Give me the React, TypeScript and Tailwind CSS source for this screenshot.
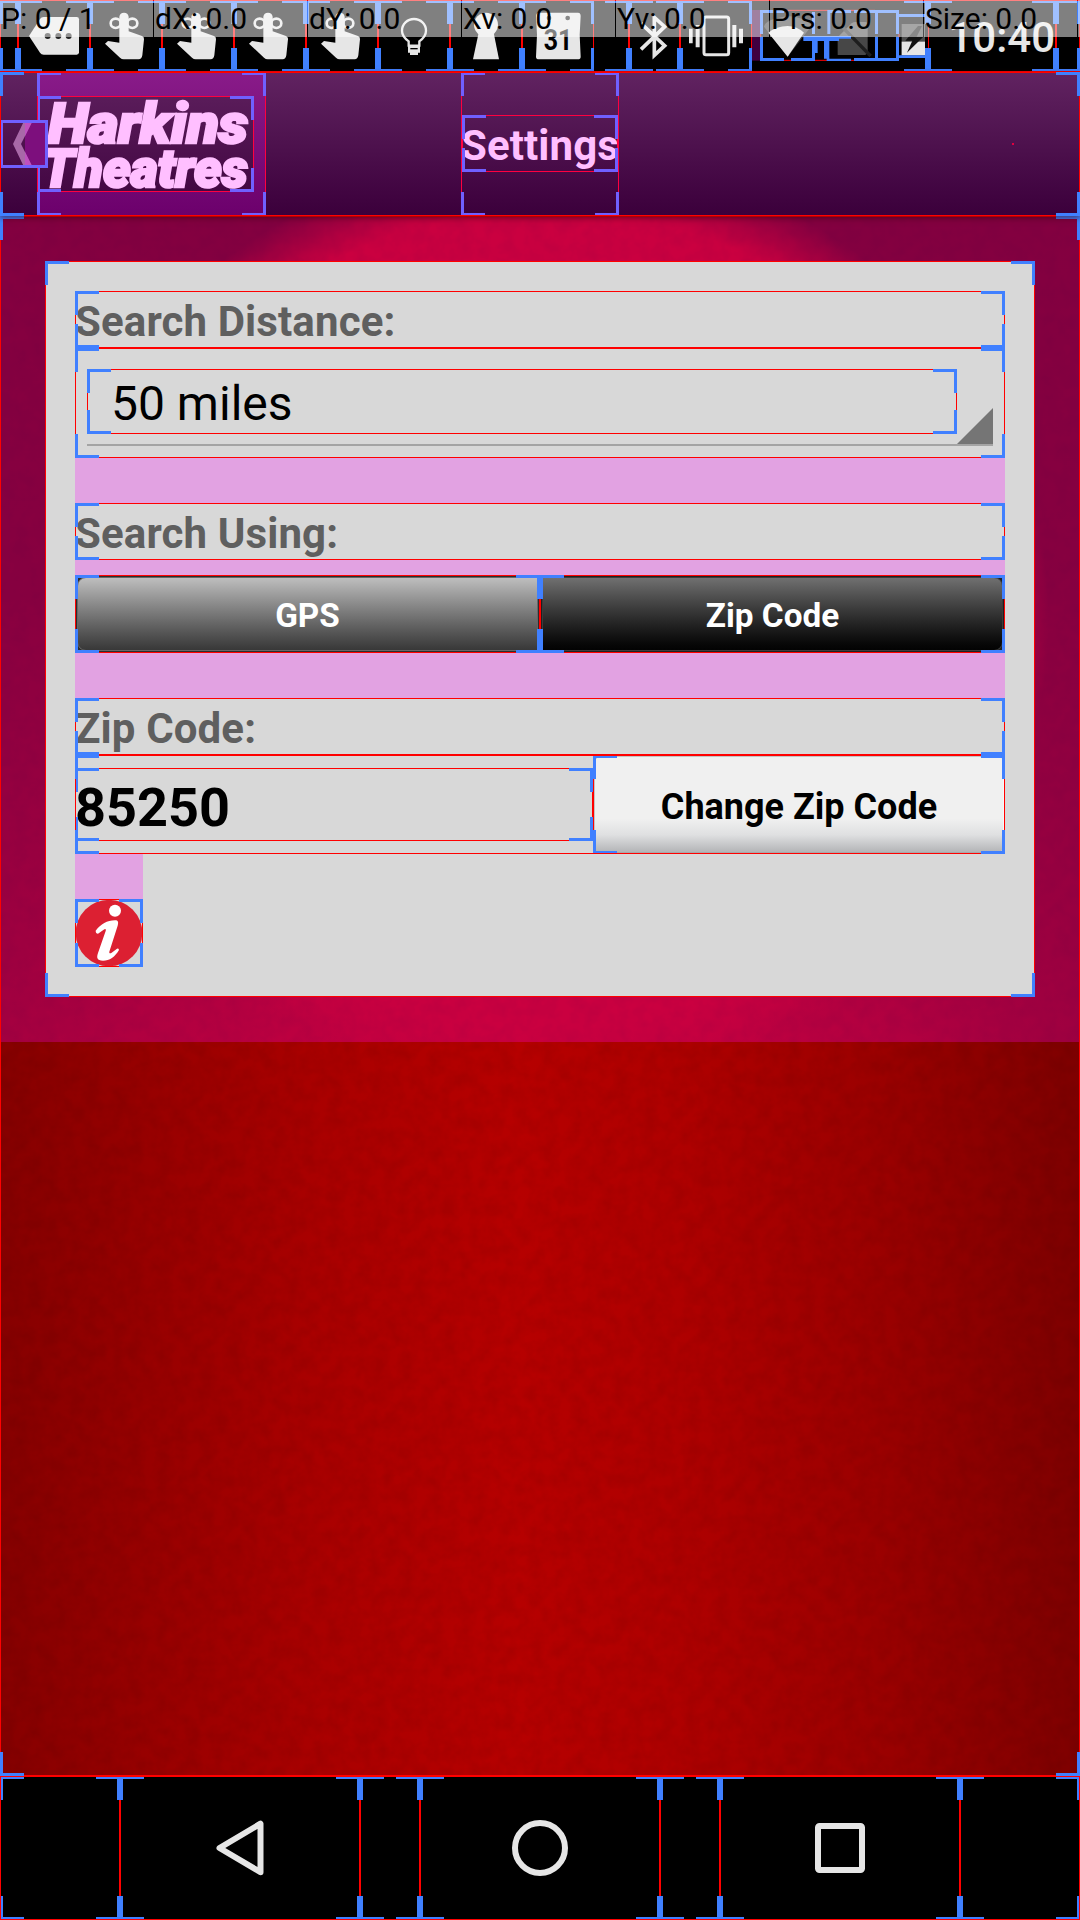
import React from "react";

type Tone = "plain" | "tinted";

/* Layout-bounds outline: a hairline frame with heavy corner marks. */
function Bounds({ tone = "plain" }: { tone?: Tone }) {
  const line = tone === "plain" ? "border-[#ff0000]" : "border-[#ff0040]";
  const mark = tone === "plain" ? "border-[#4080ff]" : "border-[#7060ff]";
  return (
    <span className={`pointer-events-none absolute inset-0 border ${line}`}>
      <span className={`absolute -top-px -left-px h-6 w-6 border-t-3 border-l-3 ${mark}`} />
      <span className={`absolute -top-px -right-px h-6 w-6 border-t-3 border-r-3 ${mark}`} />
      <span className={`absolute -bottom-px -left-px h-6 w-6 border-b-3 border-l-3 ${mark}`} />
      <span className={`absolute -right-px -bottom-px h-6 w-6 border-r-3 border-b-3 ${mark}`} />
    </span>
  );
}

function StatusCell({ width, children }: { width: string; children?: React.ReactNode }) {
  return (
    <div className={`relative h-full shrink-0 ${width}`}>
      {children}
      <Bounds />
    </div>
  );
}

const iconClass = "block h-[72px] w-[72px]";

function TagIcon() {
  return (
    <svg viewBox="0 0 216 216" className={iconClass}>
      <path d="M33 108 66 57Q70 51 77 51H176Q183 51 183 58V157Q183 164 176 164H77Q70 164 66 158Z" fill="#e6e6e6" />
      <g fill="#222"><circle cx="89" cy="108" r="9" /><circle cx="121" cy="108" r="9" /><circle cx="152" cy="108" r="9" /></g>
    </svg>
  );
}

function FingerIcon() {
  return (
    <svg viewBox="0 0 216 216" className={iconClass}>
      <g fill="none" stroke="#e6e6e6" strokeWidth="8">
        <ellipse cx="77" cy="70" rx="15" ry="14" />
        <ellipse cx="127" cy="70" rx="15" ry="14" />
      </g>
      <path d="M88 88V50Q90 38 102 38Q114 38 116 50V94L156 108Q163 111 162 118L157 166Q155 178 146 178H101Q95 178 90 173L45 131L54 123L88 128Z" fill="#e6e6e6" />
    </svg>
  );
}

function BulbIcon() {
  return (
    <svg viewBox="0 0 216 216" className={iconClass}>
      <path d="M92 137V124C80 115 72 106 72 92A36 35 0 0 1 144 92C144 106 136 115 124 124V137Z" fill="none" stroke="#e6e6e6" strokeWidth="7" />
      <path d="M90 138H126V158H120V165H96V158H90Z" fill="#e6e6e6" />
      <path d="M97 146H119" stroke="#000" strokeWidth="4" />
    </svg>
  );
}

function KeyholeIcon() {
  return (
    <svg viewBox="0 0 216 216" className={iconClass}>
      <circle cx="108" cy="74" r="36" fill="#e6e6e6" />
      <path d="M86 98H131L147 178H69Z" fill="#e6e6e6" />
    </svg>
  );
}

function CalendarIcon() {
  return (
    <svg viewBox="0 0 216 216" className={iconClass}>
      <path d="M52 38H168Q176 38 176 48L173 104L176 170Q176 178 167 178H51Q42 178 42 170L45 104L42 48Q42 38 52 38Z" fill="#e6e6e6" />
      <circle cx="81" cy="54" r="7" fill="#111" />
      <circle cx="137" cy="54" r="7" fill="#111" />
      <text x="108" y="150" textAnchor="middle" fontFamily="Roboto, sans-serif" fontWeight="700" fontSize="86" textLength="86" lengthAdjust="spacingAndGlyphs" fill="#000">31</text>
    </svg>
  );
}

function BluetoothIcon() {
  return (
    <svg viewBox="0 0 153 216" className="block h-[72px] w-[51px]">
      <path d="M36 148 107 80 76 52V166L107 137 36 70" fill="none" stroke="#e6e6e6" strokeWidth="11" />
    </svg>
  );
}

function VibrateIcon() {
  return (
    <svg viewBox="0 0 216 216" className={iconClass}>
      <rect x="72" y="51" width="74" height="113" rx="6" fill="none" stroke="#e6e6e6" strokeWidth="9" />
      <g fill="#e6e6e6">
        <path d="M27 86h11v44h-11zM47 75h12v67h-12zM157 75h12v67h-12zM177 86h12v44h-12z" />
      </g>
    </svg>
  );
}

/* Wi-Fi, missing SIM and charging battery with their nested outlines. */
function SignalCluster() {
  return (
    <svg viewBox="96 0 528 216" className="block h-[72px] w-[176px]">
      <rect x="96" y="30" width="26" height="152" fill="#400040" />
      <path d="M203 170 132 80Q135 58 203 48Q250 50 276 76Z" fill="#3a3a3a" />
      <path d="M203 170 145 98Q170 78 203 78Q230 78 252 98Z" fill="#e6e6e6" />
      <path d="M353 165V112L395 70Q400 66 406 66H436Q443 66 443 73V158L436 165Z" fill="#474747" />
      <path d="M362 76 452 168" stroke="#1e1e1e" strokeWidth="10" />
      <path d="M545 72H615V166H545Z" fill="#4d4d4d" />
      <path d="M545 125H615V166H545Z" fill="#e6e6e6" />
      <path d="M594 78 556 122H577L561 158 610 110H590L606 78Z" fill="#111" />
      <path d="M192 31H465M192 181H465M122 102V112M537 102V112" stroke="#f00" strokeWidth="3" fill="none" />
      <g fill="#4080ff">
        <path d="M120 30h72v9h-63v63h-9zM120 110h9v64h63v9h-72z" />
        <path d="M213 174h63v-63h9v72h-72zM276 36h9v66h-9zM250 108h143v8h-36v7h-107zM285 123h8v36h-8zM312 123h16v53h65v7h-73v-7h-8zM322 30h71v9h-62v63h-9z" />
        <path d="M402 30h135v72h-9v-63h-54v63h-9v-63h-63zM402 174h63v-64h9v64h54v-64h9v73h-135z" />
        <path d="M537 42h78v9h-78zM537 166h78v8h-78z" />
        <path d="M552 3h63v6h-63zM552 207h63v6h-63zM615 3h9v69h-9zM615 144h9v69h-9z" />
      </g>
    </svg>
  );
}

const pointerReadouts = ["P: 0 / 1", "dX: 0.0", "dY: 0.0", "Xv: 0.0", "Yv: 0.0", "Prs: 0.0", "Size: 0.0"];

function StatusBar() {
  return (
    <header className="relative h-[72px] bg-black">
      <div className="flex h-full">
        <StatusCell width="w-[18px]" />
        <StatusCell width="w-[72px]"><TagIcon /></StatusCell>
        <StatusCell width="w-[72px]"><FingerIcon /></StatusCell>
        <StatusCell width="w-[72px]"><FingerIcon /></StatusCell>
        <StatusCell width="w-[72px]"><FingerIcon /></StatusCell>
        <StatusCell width="w-[72px]"><FingerIcon /></StatusCell>
        <StatusCell width="w-[72px]"><BulbIcon /></StatusCell>
        <StatusCell width="w-[72px]"><KeyholeIcon /></StatusCell>
        <StatusCell width="w-[72px]"><CalendarIcon /></StatusCell>
        <div className="relative ml-[11px] h-full w-6">
          <span className="absolute inset-x-0 top-0 h-[3px] bg-[#4080ff]" />
          <span className="absolute inset-x-0 bottom-0 h-[3px] bg-[#4080ff]" />
          <span className="absolute right-0 top-0 h-full w-px bg-[#f00]" />
          <span className="absolute right-0 top-0 h-6 w-[3px] bg-[#4080ff]" />
          <span className="absolute right-0 bottom-0 h-6 w-[3px] bg-[#4080ff]" />
        </div>
        <StatusCell width="w-[51px]"><BluetoothIcon /></StatusCell>
        <StatusCell width="w-[72px]"><VibrateIcon /></StatusCell>
        <SignalCluster />
        <StatusCell width="w-[128px]">
          <div className="flex h-full items-center justify-end pt-[3px] pr-[1px] text-[42px] leading-none font-medium text-[#e6e6e6]">10:40</div>
        </StatusCell>
        <StatusCell width="w-6" />
      </div>
      <div className="absolute inset-x-0 top-0 h-px bg-[#f00]" />
      <div className="absolute inset-x-0 bottom-0 h-px bg-[#f00]" />
      <div className="absolute inset-x-0 top-0 flex h-[37px] gap-px">
        {pointerReadouts.map((text) => (
          <div key={text} className="w-[153px] shrink-0 bg-white/50 pl-px text-[30px] leading-[37px] whitespace-nowrap text-black">
            {text}
          </div>
        ))}
        <div className="flex-1 bg-white/50" />
      </div>
    </header>
  );
}

function HarkinsLogo() {
  return (
    <svg viewBox="0 0 217 96" className="block h-24 w-[217px] overflow-visible">
      <g fontFamily="Roboto, sans-serif" fontStyle="italic" fontWeight="900" fill="#ffbfff" stroke="#ffbfff" strokeWidth="2.6">
        <text x="11" y="47" fontSize="55" textLength="200" lengthAdjust="spacingAndGlyphs">Harkins</text>
        <text x="5" y="91" fontSize="54" textLength="206" lengthAdjust="spacingAndGlyphs">Theatres</text>
      </g>
    </svg>
  );
}

function ActionBar() {
  return (
    <div className="relative z-10 flex h-36 bg-linear-to-b from-[#612361] to-[#3b003b] shadow-[0_2px_6px_rgba(60,0,10,0.6)]">
      <div className="w-[37px] shrink-0" />
      <div className="relative flex w-[229px] shrink-0 items-center bg-linear-to-b from-[#891b89] to-[#6c006c]">
        <div className="relative h-24 w-[217px] bg-[linear-gradient(180deg,#5a1c5a,#430743)]">
          <HarkinsLogo />
          <Bounds tone="tinted" />
        </div>
        <Bounds tone="tinted" />
      </div>
      <div className="relative ml-[195px] flex w-[158px] shrink-0 items-center justify-center">
        <div className="relative -mt-px flex h-[57px] w-[156px] items-center justify-center pt-[5px] text-[42px] leading-none font-bold tracking-[0.1px] whitespace-nowrap text-[#ffbfff]">
          Settings
          <Bounds tone="tinted" />
        </div>
        <Bounds tone="tinted" />
      </div>
      <div className="ml-[393px] h-[2px] w-[2px] self-center bg-[#e00040]" />
      <div className="absolute top-12 left-0 h-12 w-12">
        <svg viewBox="0 0 48 48" className="block h-12 w-12">
          <rect x="25" width="23" height="48" fill="#7d0f7d" />
          <path d="M24.500 0H33L21 24 33 48H24.500L13 24Z" fill="#a868a8" />
          <path d="M25 0H33L25 16ZM25 32 33 48H25Z" fill="#c050c0" />
        </svg>
        <Bounds tone="tinted" />
      </div>
      <Bounds />
    </div>
  );
}

function Label({ children }: { children: React.ReactNode }) {
  return (
    <div className="relative flex h-[57px] items-center pt-[5px] text-[42px] leading-none font-bold tracking-[0.12px] text-[#5f5f5f]">
      {children}
      <Bounds />
    </div>
  );
}

function MarginStrip({ size }: { size: string }) {
  return <div className={`bg-[#e2a2e2] ${size}`} />;
}

function DistanceSpinner() {
  return (
    <div className="relative h-[110px] px-3 pt-[21px]">
      <div className="relative flex h-[65px] w-[870px] items-center pt-1 pl-6 text-[48px] leading-none text-black">
        50 miles
        <Bounds />
      </div>
      <div className="mt-[10px] h-[2px] bg-[#a4a4a4]" />
      <svg viewBox="0 0 36 36" className="absolute top-[60px] right-3 h-9 w-9">
        <path d="M0 36 36 0V36Z" fill="#757575" />
      </svg>
      <Bounds />
    </div>
  );
}

function ModeToggle() {
  const text = "flex h-full items-center justify-center border pt-[4px] text-[33.3px] leading-none font-bold text-white";
  return (
    <div className="relative flex h-[78px] rounded-[9px]">
      <div className="relative flex-1 rounded-l-[9px] bg-[#2c2c2c] p-[2px]">
        <div className={`${text} rounded-l-[9px] border-[#666] bg-linear-to-b from-[#bebebe] to-[#383838]`}>GPS</div>
        <Bounds />
      </div>
      <div className="relative flex-1 rounded-r-[9px] bg-[#202020] p-[2px]">
        <div className={`${text} rounded-r-[9px] border-[#3c3c3c] bg-linear-to-b from-[#707070] to-[#030303]`}>Zip Code</div>
        <Bounds />
      </div>
    </div>
  );
}

function InfoIcon() {
  return (
    <div className="relative h-[68px] w-[68px]">
      <svg viewBox="0 0 204 204" className="block h-[68px] w-[68px]">
        <circle cx="102" cy="102" r="100" fill="#dc2032" />
        <circle cx="120" cy="35" r="18" fill="#fff" />
        <path d="M62 95C78 76 96 64 120 64C130 64 131 70 128 80L103 158C102 164 106 164 110 161L126 149Q131 148 132 153C120 174 104 185 84 185C66 185 64 176 69 162L92 96C94 90 91 88 86 92L69 104Q62 104 62 95Z" fill="#fff" />
      </svg>
      <Bounds />
    </div>
  );
}

function SettingsCard() {
  return (
    <section className="relative mx-auto h-[736px] w-[990px] rounded-[6px] bg-[#d8d8d8] p-[30px]">
      <Label>Search Distance:</Label>
      <DistanceSpinner />
      <MarginStrip size="h-[45px]" />
      <Label>Search Using:</Label>
      <MarginStrip size="h-[15px]" />
      <ModeToggle />
      <MarginStrip size="h-[45px]" />
      <Label>Zip Code:</Label>
      <div className="relative flex h-[99px] items-center">
        <div className="relative flex h-[73px] w-[518px] items-center pt-[6px] text-[54px] leading-none font-bold text-black">
          85250
          <Bounds />
        </div>
        <div className="relative h-full flex-1">
          <div className="flex h-full items-center justify-center rounded-[7px] border-2 border-[#c4c4c4] border-r-[#f8f8f8] border-b-[#a8a8a8] bg-linear-to-b from-[#f0f0f0] from-65% via-[#dfe0e1] via-82% to-[#b4b5b7] pt-[5px] text-[36px] leading-none font-bold text-black">
            Change Zip Code
          </div>
          <Bounds />
        </div>
        <Bounds />
      </div>
      <MarginStrip size="h-[45px] w-[68px]" />
      <InfoIcon />
      <Bounds />
    </section>
  );
}

function Content() {
  return (
    <main className="relative h-[1560px] bg-[#a00000]">
      <div className="absolute inset-0 bg-[linear-gradient(90deg,#860000_0%,#980000_14%,#aa0000_30%,#b60000_48%,#ae0000_64%,#9a0000_82%,#7e0000_100%)]" />
      <div className="absolute inset-x-0 top-0 h-[826px] bg-[radial-gradient(ellipse_480px_445px_at_545px_404px,rgba(184,0,0,1)_0%,rgba(184,0,0,1)_92%,rgba(184,0,0,0)_105%),linear-gradient(180deg,rgba(90,0,0,1)_0%,rgba(94,0,0,0.95)_45%,rgba(110,0,0,0)_100%)]" />
      <svg className="absolute inset-0 h-full w-full opacity-[0.06]">
        <filter id="grain">
          <feTurbulence type="fractalNoise" baseFrequency="0.07" numOctaves="3" seed="4" />
          <feColorMatrix values="0 0 0 0 0  0 0 0 0 0  0 0 0 0 0  2 0 0 0 -0.6" />
        </filter>
        <rect width="100%" height="100%" filter="url(#grain)" />
      </svg>
      <div className="relative h-[826px] bg-[#ff00ff]/25 pt-[45px]">
        <SettingsCard />
      </div>
      <Bounds />
    </main>
  );
}

function NavCell({ width, children }: { width: string; children?: React.ReactNode }) {
  return (
    <div className={`relative flex h-full shrink-0 items-center justify-center ${width}`}>
      {children}
      <Bounds />
    </div>
  );
}

function NavBar() {
  const icon = "block h-[60px] w-[60px]";
  return (
    <nav className="relative flex h-36 bg-black">
      <NavCell width="w-[120px]" />
      <NavCell width="w-[240px]">
        <svg viewBox="0 0 60 60" className={icon}>
          <path d="M50.500 5.500V54L9.500 29.800Z" transform="translate(0 .2)" fill="none" stroke="#e6e6e6" strokeWidth="6" strokeLinejoin="round" />
        </svg>
      </NavCell>
      <NavCell width="w-[60px]" />
      <NavCell width="w-[240px]">
        <svg viewBox="0 0 60 60" className={icon}>
          <circle cx="30" cy="30" r="25" fill="none" stroke="#e6e6e6" strokeWidth="6" />
        </svg>
      </NavCell>
      <NavCell width="w-[60px]" />
      <NavCell width="w-[240px]">
        <svg viewBox="0 0 60 60" className={icon}>
          <rect x="8" y="8" width="44" height="44" rx="1.500" fill="none" stroke="#e6e6e6" strokeWidth="6" />
        </svg>
      </NavCell>
      <NavCell width="w-[120px]" />
      <div className="absolute inset-0 border border-[#f00]" />
    </nav>
  );
}

export default function App() {
  return (
    <div className="h-[1920px] w-[1080px] overflow-hidden bg-black font-['Roboto',sans-serif]">
      <StatusBar />
      <ActionBar />
      <Content />
      <NavBar />
    </div>
  );
}
